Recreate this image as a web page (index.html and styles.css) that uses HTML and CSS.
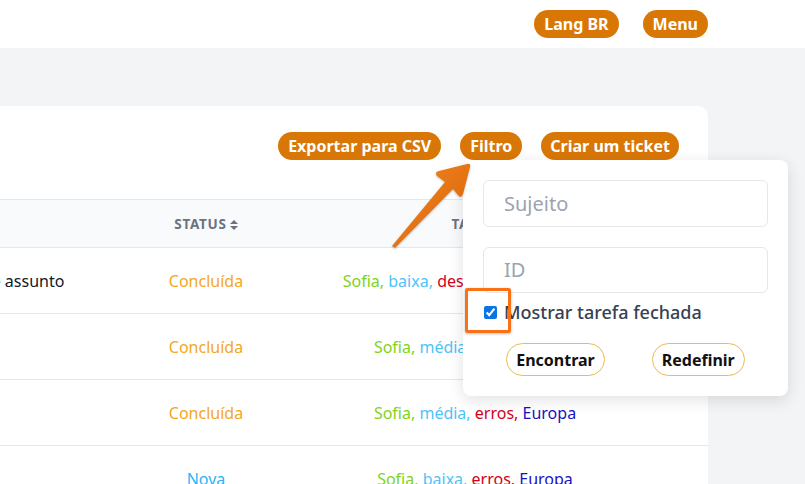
FILE: index.html
```html
<!DOCTYPE html>
<html lang="pt-BR">
<head>
	<meta charset="UTF-8">
	<title>Tickets</title>
	<link rel="stylesheet" href="styles.css">
</head>
<body>

	<header class="topbar">
		<button class="pill">Lang BR</button>
		<button class="pill">Menu</button>
	</header>

	<main class="page">
		<section class="card">
			<div class="toolbar">
				<button class="pill">Exportar para CSV</button>
				<button class="pill">Filtro</button>
				<button class="pill">Criar um ticket</button>
			</div>

			<table class="tickets">
				<thead>
					<tr>
						<th class="col-subject">Assunto</th>
						<th class="col-status">Status<svg class="sort" width="8" height="10" viewBox="0 0 8 10"><path d="M0 4 L4 0 L8 4 Z M0 6 L8 6 L4 10 Z" fill="#6b7280"/></svg></th>
						<th class="col-tags">Tags<svg class="sort" width="8" height="10" viewBox="0 0 8 10"><path d="M0 4 L4 0 L8 4 Z M0 6 L8 6 L4 10 Z" fill="#6b7280"/></svg></th>
					</tr>
				</thead>
				<tbody>
					<tr>
						<td class="col-subject">Exemplo de assunto</td>
						<td class="col-status done">Concluída</td>
						<td class="col-tags"><span class="t-who">Sofia,</span> <span class="t-prio">baixa,</span> <span class="t-kind">desenvolvedor,</span> <span class="t-region">Europa</span></td>
					</tr>
					<tr>
						<td class="col-subject"></td>
						<td class="col-status done">Concluída</td>
						<td class="col-tags"><span class="t-who">Sofia,</span> <span class="t-prio">média,</span> <span class="t-kind">erros,</span> <span class="t-region">Europa</span></td>
					</tr>
					<tr>
						<td class="col-subject"></td>
						<td class="col-status done">Concluída</td>
						<td class="col-tags"><span class="t-who">Sofia,</span> <span class="t-prio">média,</span> <span class="t-kind">erros,</span> <span class="t-region">Europa</span></td>
					</tr>
					<tr>
						<td class="col-subject"></td>
						<td class="col-status new">Nova</td>
						<td class="col-tags"><span class="t-who">Sofia,</span> <span class="t-prio">baixa,</span> <span class="t-kind">erros,</span> <span class="t-region">Europa</span></td>
					</tr>
				</tbody>
			</table>
		</section>
	</main>

	<!-- painel do filtro -->
	<div class="filter">
		<input type="text" class="field" placeholder="Sujeito">
		<input type="text" class="field" placeholder="ID">
		<label class="check">
			<input type="checkbox" checked>
			<span>Mostrar tarefa fechada</span>
		</label>
		<div class="filter-actions">
			<button class="ghost">Encontrar</button>
			<button class="ghost">Redefinir</button>
		</div>
	</div>

	<!-- anotação -->
	<div class="mark"></div>
	<svg class="arrow" width="100" height="100" viewBox="380 155 100 100">
		<defs>
			<linearGradient id="arrowfill" x1="0" y1="0" x2="1" y2="1">
				<stop offset="0" stop-color="#f58a24"/>
				<stop offset="1" stop-color="#d65f05"/>
			</linearGradient>
		</defs>
		<path d="M392 246 L445 182 L437 176 Q434 172 439 171 L467 164 Q471 163 470 167 L463 194 Q461 199 458 195 L453 189 L395 248 Z" fill="url(#arrowfill)"/>
	</svg>

</body>
</html>
```

FILE: styles.css
```css
body{
	margin: 0;
	background-color: #f3f4f6;
	font-family: "Noto Sans", "Open Sans", sans-serif;
	color: #111827;
	overflow: hidden;
	height: 484px;
}

.pill{
	border: none;
	border-radius: 14px;
	background-color: #d97706;
	color: #fff;
	font-family: inherit;
	font-weight: 700;
	font-size: 16px;
	height: 28px;
	padding: 0 10px;
	cursor: pointer;
}

.topbar{
	height: 48px;
	background-color: #fff;
	display: flex;
	justify-content: flex-end;
	align-items: center;
	gap: 24px;
	padding-right: 97px;
}

.page{
	padding-top: 58px;
	padding-right: 97px;
}

.card{
	margin-left: -111px;
	background-color: #fff;
	border-radius: 10px;
	padding-top: 26px;
	height: 400px;
}

.toolbar{
	display: flex;
	justify-content: flex-end;
	gap: 19px;
	padding-right: 29px;
	margin-bottom: 39px;
}
.toolbar .pill:last-child{padding: 0 9px;}

.tickets{
	width: 100%;
	border-collapse: collapse;
	table-layout: fixed;
}
.tickets th{
	background-color: #f9fafb;
	border-top: 1px solid #e5e7eb;
	border-bottom: 1px solid #e5e7eb;
	height: 47px;
	padding: 0;
	font-size: 13.5px;
	font-weight: 700;
	letter-spacing: 0.7px;
	text-transform: uppercase;
	color: #6b7280;
}
.tickets td{
	height: 65px;
	border-bottom: 1px solid #e5e7eb;
	font-size: 16px;
	padding: 0;
}
.tickets .col-subject{
	text-align: left;
	padding-left: 24px;
}
.col-status{
	width: 150px;
	text-align: center;
}
.tickets .col-tags{
	width: 388px;
	padding-right: 39px;
	text-align: center;
	white-space: nowrap;
}
.sort{
	margin-left: 3px;
	vertical-align: -1px;
}

.done{color: #f5a623;}
.new{color: #29b6f6;}
.t-who{color: #7ed321;}
.t-prio{color: #4fc3f7;}
.t-kind{color: #d0021b;}
.t-region{color: #1a10c4;}

.filter{
	position: absolute;
	left: 463px;
	top: 160px;
	width: 285px;
	height: 196px;
	padding: 20px;
	background-color: #fff;
	border-radius: 8px;
	box-shadow: 0 4px 16px rgba(0,0,0,0.12);
	display: flex;
	flex-direction: column;
	gap: 20px;
}
.field{
	box-sizing: border-box;
	height: 47px;
	width: 100%;
	border: 1px solid #e5e7eb;
	border-radius: 6px;
	padding: 0 20px;
	font-family: inherit;
	font-size: 20px;
	color: #374151;
	outline: none;
}
.field::placeholder{color: #9ca3af;}

.check{
	display: flex;
	align-items: center;
	gap: 7px;
	margin-top: -13px;
	font-size: 18px;
	font-weight: 500;
	color: #374151;
}
.check input{
	margin: 0 0 0 1px;
	width: 13px;
	height: 13px;
	accent-color: #0b74e5;
}

.filter-actions{
	display: flex;
	justify-content: center;
	gap: 47px;
	margin-top: -1px;
}
.ghost{
	height: 33px;
	padding: 0 9px;
	border: 1px solid #f0b94a;
	border-radius: 17px;
	background-color: #fff;
	font-family: inherit;
	font-size: 16px;
	font-weight: 700;
	color: #111;
	cursor: pointer;
}

.mark{
	position: absolute;
	left: 465px;
	top: 288px;
	width: 40px;
	height: 39px;
	border: 3px solid #f97316;
	border-radius: 2px;
	box-shadow: 0 1px 3px rgba(0,0,0,0.25);
}
.arrow{
	position: absolute;
	left: 380px;
	top: 155px;
	filter: drop-shadow(0 1px 1px rgba(0,0,0,0.25));
}
```
